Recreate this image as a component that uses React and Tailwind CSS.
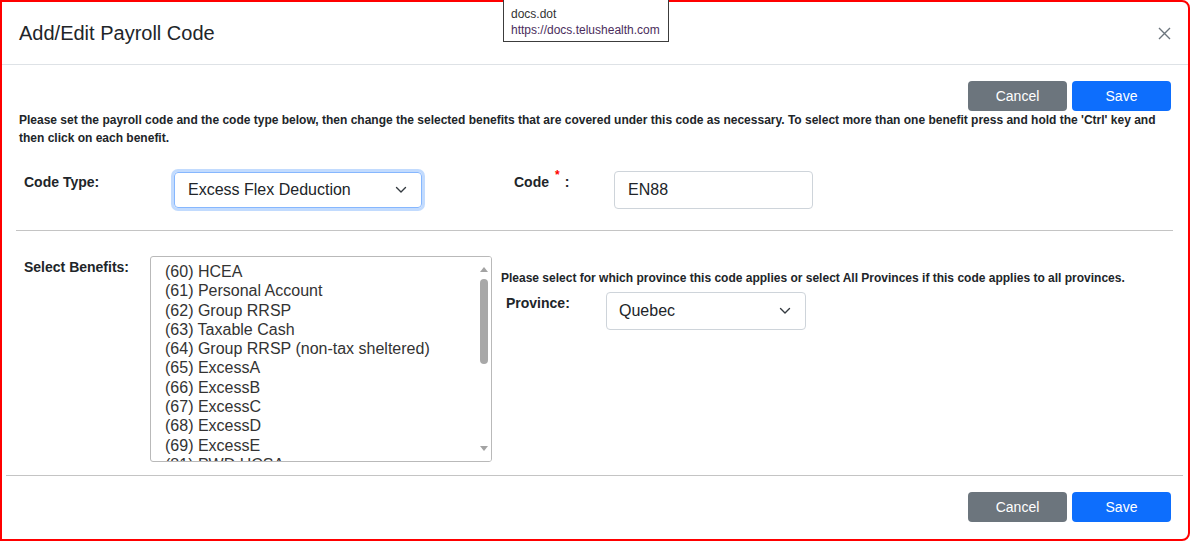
import React from 'react';

const benefits = [
  '(60) HCEA',
  '(61) Personal Account',
  '(62) Group RRSP',
  '(63) Taxable Cash',
  '(64) Group RRSP (non-tax sheltered)',
  '(65) ExcessA',
  '(66) ExcessB',
  '(67) ExcessC',
  '(68) ExcessD',
  '(69) ExcessE',
  '(81) PWD HCSA',
];

const Chevron = () => (
  <svg width="12" height="8" viewBox="0 0 12 8" fill="none">
    <path d="M1.5 1.5 6 6l4.5-4.5" stroke="#343a40" strokeWidth="1.4" strokeLinecap="round" strokeLinejoin="round" />
  </svg>
);

const Buttons = () => (
  <div className="flex justify-end gap-[5px]">
    <button className="w-[99px] h-[30px] rounded bg-[#6c757d] text-white text-[14px]">Cancel</button>
    <button className="w-[99px] h-[30px] rounded bg-[#0d6efd] text-white text-[14px]">Save</button>
  </div>
);

const App = () => {
  return (
    <div className="relative w-[1190px] h-[541px] bg-white overflow-hidden" style={{ fontFamily: '"Liberation Sans", Arial, sans-serif' }}>
      <div className="w-full h-full flex flex-col border-2 border-[#ff0000] rounded-tr-lg rounded-br-lg text-[#212529]">
        {/* Header */}
        <div className="h-[63px] shrink-0 flex items-center justify-between border-b border-[#dee2e6] pl-[17px] pr-[17px]">
          <h1 className="text-[20px] leading-none">Add/Edit Payroll Code</h1>
          <svg width="13" height="13" viewBox="0 0 13 13">
            <path d="M1 1l11 11M12 1 1 12" stroke="#6c757d" strokeWidth="1.4" />
          </svg>
        </div>

        {/* Body */}
        <div className="flex-1 flex flex-col">
          <div className="mt-4 pr-[17px]">
            <Buttons />
          </div>
          <p className="pl-[17px] pr-[14px] text-[12px] leading-[18px] font-bold">
            Please set the payroll code and the code type below, then change the selected benefits that are covered under this code as necessary. To select more than one benefit press and hold the 'Ctrl' key and then click on each benefit.
          </p>

          {/* Code row */}
          <div className="mt-6 flex items-start pl-[22px]">
            <div className="w-[150px] mt-[1px] text-[14px] font-bold">Code Type:</div>
            <div className="w-[248px] h-[36px] mt-[1px] flex items-center justify-between pl-[13px] pr-[14px] border border-[#86b7fe] rounded shadow-[0_0_0_3px_rgba(13,110,253,0.25)] text-[16px]">
              <span>Excess Flex Deduction</span>
              <Chevron />
            </div>
            <div className="ml-[92px] w-[100px] mt-[1px] text-[14px] font-bold flex">
              <span>Code</span>
              <span className="text-[#ff0000] text-[12px] ml-[6px] -mt-[6px]">*</span>
              <span className="ml-[5px]">:</span>
            </div>
            <div className="w-[199px] h-[38px] flex items-center pl-[13px] border border-[#ced4da] rounded text-[16px]">EN88</div>
          </div>

          <div className="mt-[21px] ml-[14px] mr-[15px] h-px bg-[#c4c4c4]" />

          {/* Benefits row */}
          <div className="mt-[25px] flex items-start pl-[22px]">
            <div className="w-[126px] mt-[1px] text-[14px] font-bold">Select Benefits:</div>
            <div className="relative w-[342px] h-[206px] border border-[#b9b9b9] rounded-[3px] overflow-hidden">
              <ul className="pt-[5px] pl-[14px] text-[16px] leading-[19.3px] text-[#333333]">
                {benefits.map((b) => (
                  <li key={b}>{b}</li>
                ))}
              </ul>
              {/* scrollbar */}
              <div className="absolute top-0 right-0 w-[15px] h-full bg-white flex flex-col items-center">
                <svg width="8" height="5" viewBox="0 0 8 5" className="mt-[10px]">
                  <path d="M4 0 8 5H0z" fill="#a3a3a3" />
                </svg>
                <div className="mt-[7px] w-[8px] h-[85px] rounded-full bg-[#a8a8a8]" />
                <div className="flex-1" />
                <svg width="8" height="5" viewBox="0 0 8 5" className="mb-[10px]">
                  <path d="M0 0h8L4 5z" fill="#a3a3a3" />
                </svg>
              </div>
            </div>
            <div className="ml-[9px] mt-[14px] flex flex-col">
              <p className="text-[12px] leading-[16px] font-bold">
                Please select for which province this code applies or select All Provinces if this code applies to all provinces.
              </p>
              <div className="mt-[6px] flex items-start pl-[5px]">
                <div className="w-[100px] mt-[1px] text-[14px] font-bold">Province:</div>
                <div className="w-[200px] h-[38px] flex items-center justify-between pl-[12px] pr-[14px] border border-[#ced4da] rounded text-[16px]">
                  <span>Quebec</span>
                  <Chevron />
                </div>
              </div>
            </div>
          </div>

          <div className="mt-[13px] ml-[4px] mr-[5px] h-px bg-[#c4c4c4]" />

          <div className="mt-4 pr-[17px]">
            <Buttons />
          </div>
        </div>
      </div>

      {/* link tooltip */}
      <div className="absolute left-[503px] top-[-1px] w-[166px] h-[43px] bg-white border border-[#3c3c3c] px-[7px] pt-[6px] text-[12px] leading-[16px]">
        <div className="text-[#333333]">docs.dot</div>
        <div className="text-[#4b2d5c]">https://docs.telushealth.com</div>
      </div>
    </div>
  );
};

export default App;
